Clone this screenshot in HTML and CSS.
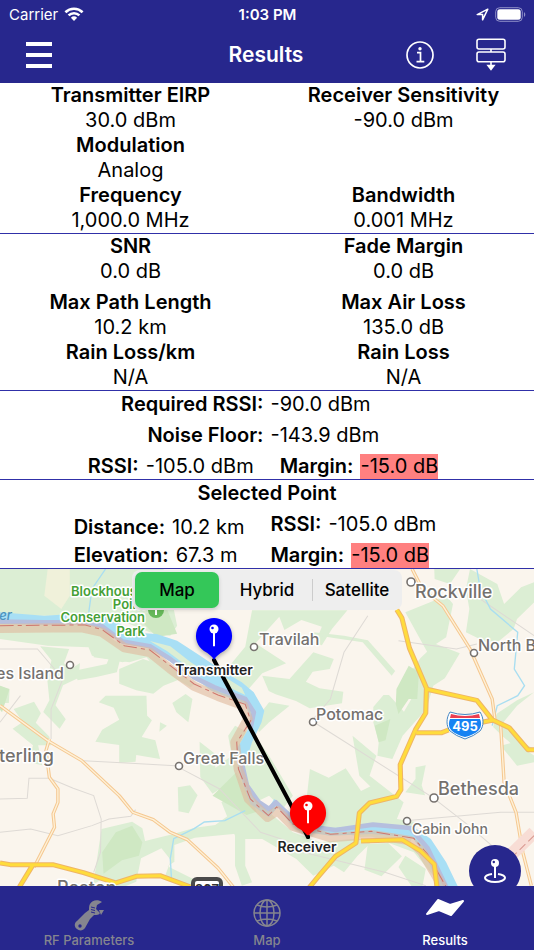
FILE: index.html
```
<!DOCTYPE html>
<html lang="en">

<head>
  <meta charset="utf-8">
  <title>Results</title>
  <meta name="viewport" content="width=device-width,initial-scale=1">
  <link rel="stylesheet" href="styles.css">
</head>

<body>
  <header class="header">
    <div class="status">
      <div class="status__carrier">
        <span>Carrier</span>
        <svg width="20" height="16" viewBox="0 0 20 16" fill="none" stroke="#fff" stroke-width="2.6">
          <path d="M1.400 6.200a12.400 12.400 0 0 1 17.200 0M4.600 9.400a7.800 7.800 0 0 1 10.800 0" />
          <path d="M10 15l-3.100-3.200a4.500 4.500 0 0 1 6.200 0z" fill="#fff" stroke="none" />
        </svg>
      </div>
      <span class="status__time">1:03 PM</span>
      <div class="status__icons">
        <svg width="13" height="13" viewBox="0 0 13 13" fill="none" stroke="#fff" stroke-width="1.5" stroke-linejoin="round">
          <path d="M1.200 6.600L11.800 1.200 6.600 11.800V6.600z" />
        </svg>
        <svg width="31" height="15" viewBox="0 0 31 15">
          <rect x=".7" y=".7" width="26.6" height="13.6" rx="4" fill="none" stroke="#8f8fc8" />
          <rect x="2.3" y="2.3" width="23.4" height="10.4" rx="2.5" fill="#fff" />
          <path d="M29 5.200c1.700.6 1.700 4 0 4.600z" fill="#8f8fc8" />
        </svg>
      </div>
    </div>
    <div class="nav">
      <button class="nav__button" type="button" aria-label="Menu">
        <svg width="26" height="26" viewBox="0 0 26 26" fill="#fff">
          <path d="M0 0h26v4H0zM0 11h26v4H0zM0 22h26v4H0z" />
        </svg>
      </button>
      <h1>Results</h1>
      <div class="nav__actions">
        <button class="nav__button" type="button" aria-label="Info">
          <svg width="28" height="28" viewBox="0 0 28 28" fill="none" stroke="#fff" stroke-width="1.7">
            <circle cx="14" cy="14" r="13" />
            <circle cx="14" cy="7.7" r="1.7" fill="#fff" stroke="none" />
            <path d="M11 11.700h3.500v8.800M10.500 20.600h7.800" />
          </svg>
        </button>
        <button class="nav__button" type="button" aria-label="Move sections down">
          <svg width="30" height="33" viewBox="0 0 30 33" fill="none" stroke="#fff" stroke-width="1.6">
            <rect x="1" y="1.3" width="28" height="9.7" rx="2" />
            <rect x="1" y="14" width="28" height="9.7" rx="2" />
            <path d="M15 11v3M15 24v4" />
            <path d="M12 27.500h6l-3 4z" fill="#fff" />
          </svg>
        </button>
      </div>
    </div>
  </header>

  <main>
    <section class="grid">
      <dl class="item">
        <dt>Transmitter EIRP</dt>
        <dd>30.0 dBm</dd>
      </dl>
      <dl class="item">
        <dt>Receiver Sensitivity</dt>
        <dd>-90.0 dBm</dd>
      </dl>
      <dl class="item item--left">
        <dt>Modulation</dt>
        <dd>Analog</dd>
      </dl>
      <dl class="item item--left">
        <dt>Frequency</dt>
        <dd>1,000.0 MHz</dd>
      </dl>
      <dl class="item">
        <dt>Bandwidth</dt>
        <dd>0.001 MHz</dd>
      </dl>
    </section>

    <section class="grid">
      <dl class="item item--spaced">
        <dt>SNR</dt>
        <dd>0.0 dB</dd>
      </dl>
      <dl class="item item--spaced">
        <dt>Fade Margin</dt>
        <dd>0.0 dB</dd>
      </dl>
      <dl class="item">
        <dt>Max Path Length</dt>
        <dd>10.2 km</dd>
      </dl>
      <dl class="item">
        <dt>Max Air Loss</dt>
        <dd>135.0 dB</dd>
      </dl>
      <dl class="item">
        <dt>Rain Loss/km</dt>
        <dd>N/A</dd>
      </dl>
      <dl class="item">
        <dt>Rain Loss</dt>
        <dd>N/A</dd>
      </dl>
    </section>

    <section class="summary">
      <dl class="pair pair--split">
        <dt>Required RSSI:</dt>
        <dd>-90.0 dBm</dd>
      </dl>
      <dl class="pair pair--split">
        <dt>Noise Floor:</dt>
        <dd>-143.9 dBm</dd>
      </dl>
      <div class="row">
        <dl class="pair">
          <dt>RSSI:</dt>
          <dd>-105.0 dBm</dd>
        </dl>
        <dl class="pair">
          <dt>Margin:</dt>
          <dd class="bad">-15.0 dB</dd>
        </dl>
      </div>
    </section>

    <section class="summary">
      <h2>Selected Point</h2>
      <div class="row row--point">
        <div class="stack stack--tight">
          <dl class="pair">
            <dt>Distance:</dt>
            <dd>10.2 km</dd>
          </dl>
          <dl class="pair">
            <dt>Elevation:</dt>
            <dd>67.3 m</dd>
          </dl>
        </div>
        <div class="stack">
          <dl class="pair">
            <dt>RSSI:</dt>
            <dd>-105.0 dBm</dd>
          </dl>
          <dl class="pair">
            <dt>Margin:</dt>
            <dd class="bad">-15.0 dB</dd>
          </dl>
        </div>
      </div>
    </section>
  </main>

  <div class="map">
    <svg class="map__canvas" viewBox="0 0 534 317" preserveAspectRatio="xMidYMid slice">
      <rect width="534" height="317" fill="#faf5ed" />

      <g transform="scale(.3406 .3333)">
        <!-- woods and parks -->
        <g fill="#dceed4">
          <path d="M0 0H480L500 70 520 170 500 200 440 190 380 165 300 140 0 140z" />
          <path d="M0 160h280l60 60-40 30 90 20-30 10-90-20-10-25-120-5-140-20z" />
          <path d="M280 190l90 40 70 10 60 50 70 55-10 10-60-35-40-20-30-35-50 15-105-15z" />
          <path d="M118 232l85 8-15 42 15 22 32-22-5 45-45 22-22 60 30 42-18 28-48-50 18-35-6-60 12-60zM218 305l95-20 10-25 30 10-10 40-60 14-55 10z" />
          <path d="M0 350l28 12-2 40-26 0zM40 420l60-22 20 35-15 28 40 42 5 26-38 0 12 60-42-10 15-50-60-50 30-20z" />
          <path d="M290 400l20-20 120 0 2 60 14 14-30 50 40 10 14 56-70-12-2 20-48 4 0-54-70-10 20-36 50-30-16-36z" />
          <path d="M350 300l70-30 60 20 50 40-50 20-30 24-50-10-50-20z" />
          <path d="M545 375l20 15-12 70-35-30-12-28zM470 460l20 10-22 18zM586 518l50 40-6 28 20 70-26 18-36-50z" />
          <path d="M522 655l36-6 22 30-26 54-30-6z" />
          <path d="M298 780l90-22 30 20 8 38 80-20 66-20 60-8 60-44 50 8-50 62-120 12-60 22 0 50-20 14 80 40-20 26-70-30 20-54-28-36-60 30-14 70-60 26-30-40-36 22z" />
          <path d="M690 470l60 30 40 60 70 120-30 40-40-40-60 30-80-40-60-40 90-70-10-60z" />
          <path d="M650 700l60-40 80 70 70 60 80 30 90-10 70 0-50 50-40 50-30-20-60 30-50-50-100-60-50 0 0 80 20 50-30 10-20-60 0-90z" />
          <path d="M900 690l10-90 55 26 50-28 45 68 40-20 50 90-40 66-50 2-150-30z" />
          <path d="M740 124h280l-45 55-30 50-20-6 20-50-60-20-50 30-15-40-70 80 90 60-70 30-60 70-60-40 30-60 40-50z" />
          <path d="M770 320l80 10 70-80 60 20-12 30-50 8-20 30 40 20 70 10-4 35-95 15-40-22-60-20-20-10z" />
          <path d="M920 190l90 10 70 14 80 92-10 14-85-100-90-14-60-10z" />
          <path d="M790 400l60 10-60 50-30 30-8-40z" />
          <path d="M1190 130l120-50 20 25-20 100-30 20 70 28-44 75-34 22-20 70-70 80-30 70-44-10 4-40-16-60 0-46 30-36 16 0 44 50 40-70-32-30 40-60 20-20z" />
          <path d="M1275 0h76l-30 45-45-15zM1380 0l80 45 20 60 50-50 38-15v60l-50 50-10 30-60 50-80-40 10-70-10-60z" />
          <path d="M1568 370l-50 40-40 50 40 50 50 30-30 16-60-52-30-30 10-40 60-40z" />
          <path d="M1035 500l70 60-20 60 100 80-20 50 60 10-20 60 80 60 40 70-20 10-90-110-130-50-10-50 30-80-50-50z" />
          <path d="M1190 670l30-40 0-35 30-6-12 60 10 30z" />
          <path d="M1080 824l60-2 40 40-60 60-50-20zM1190 860l60 40-10 54h-30l-40-60zM1470 530l40-10 58 40v20l-50 10z" />
        </g>
        <g fill="#cfe8c3">
          <path d="M1164 360l36-70 30 20-5 80-25 0-30 45-8-30zM1100 470l46-20-14 64-20 6z" />
          <path d="M624 680l70-70 60 118-30 10zM300 850l40-60 48-20 30 50-10 40-50 14-54 40zM0 350l28 10-22 70-6-8zM400 140l90-20 30 74-60 10z" />
        </g>
        <path d="M140 0h65v80l-25 40-50-40z" fill="#f0f1da" />

        <!-- small roads -->
        <path d="M0 240l110 0 50 60 28 20-38 100 0 90M0 690l80-2 5-60 60 0 70 30 60 22 22 70-2 100-20 60M0 790l90-10 80 20 100-30 50-20 64-8 14-20M245 575l270 15 130 70 120 130 90 30M1080 140l-70 110-40 140-50 60M930 465l340 220 100 80 80 70M1170 215l170 25 60-15M1190 755l280-25h98M1410 90l158 110M890 850l240 60 120 40M0 460l60-80" fill="none" stroke="#dedad5" stroke-width="3" />
        <path d="M310 0l-40 60-10 75M1400 0l10 60 30 60 80 70-10 110 30 50-20 30-60 30-15 60M720 725l-60 30-60 4-30 20-60 30-10 60 4 70" fill="none" stroke="#a9def1" stroke-width="4" />

        <!-- secondary roads -->
        <g fill="none" stroke="#f5c891" stroke-width="10" stroke-linejoin="round">
          <path d="M0 410l140 105 100 60 110 105 40 50 60 22 50 38 50 22 90 85 45 57M145 510l-10 35 10 80 25 35v40l-14 35 4 40-60 120M1210 0l30 60 60 50 80 130 65 150 8 60M1470 470l10 170 35 90 20 120 25 100" />
        </g>
        <g fill="none" stroke="#fef1d8" stroke-width="4" stroke-linejoin="round">
          <path d="M0 410l140 105 100 60 110 105 40 50 60 22 50 38 50 22 90 85 45 57M145 510l-10 35 10 80 25 35v40l-14 35 4 40-60 120M1210 0l30 60 60 50 80 130 65 150 8 60M1470 470l10 170 35 90 20 120 25 100" />
        </g>

        <!-- Potomac river and the state border along it -->
        <path d="M0 130L130 140 260 132 310 138 350 160 380 190 460 195 520 215 580 255 660 310 710 340 745 370 776 425 768 460 740 520 715 600 722 660 750 695 790 715 805 690 850 730 930 765 960 778 1100 770 1220 778 1265 810 1310 880 1345 954 1290 954 1250 860 1210 805 1090 795 970 800 900 790 850 760 815 715 790 745 735 705 705 620 695 540 740 460 720 405 620 365 550 310 480 265 430 235 360 220 290 170 240 160 0 160z" fill="#a8dff5" />
        <path d="M440 216l60 16 60 48 40 26-50-14-60-46zM660 324l50 32 10 22-50-24z" fill="#dceed4" />
        <path d="M0 158L130 160 250 160 300 172 360 218 440 232 500 270 570 325 630 355 720 390 745 430 735 480M705 560l20 90 35 50 30 20 20-20 45 45 70 30 60 8 110-16 110 10 50 60 55 117" fill="none" stroke="#b5bfde" stroke-width="14" stroke-linejoin="round" />
        <path d="M0 178L240 176 300 190 365 236 440 250 500 300 570 352 640 382 715 410 728 450 690 520 700 600 730 690 785 745 815 725 860 772 970 806 1090 797 1205 815 1240 850 1300 954" fill="none" stroke="#dfb99c" stroke-opacity=".6" stroke-width="28" stroke-linejoin="round" />
        <path d="M0 170L250 168 300 182 365 230 440 243 500 290 570 345 640 378 720 406 736 455 695 520 700 600 735 690 788 740 812 714 860 765 970 796 1090 787 1215 808 1255 855 1310 954" fill="none" stroke="#cf776e" stroke-width="3" stroke-dasharray="40 12 12 12" />
        <path d="M1568 790l-90 90-80 74" fill="none" stroke="#f8ddd5" stroke-width="38" />
        <path d="M1568 800l-90 90-60 64" fill="none" stroke="#d99890" stroke-width="3" stroke-dasharray="24 12" />

        <!-- highways -->
        <g fill="none" stroke-linejoin="round">
          <path d="M0 882l30 5h125l90 24 95 31 60-20 70-2 90 34M97 887l-40 67M1165 122l15 25 22 90 50 120-2 75-30 50-45 105 2 75-12 20-80 20-30 30-10 90-60 40-50 60-40 50M1250 360l150 34 45 58 50 24 55 66h18M1222 491h75l20-8M1415 460l30-6M1060 816l120-4 55 34 40 40 8 68" stroke="#efb566" stroke-width="15" />
          <path d="M0 882l30 5h125l90 24 95 31 60-20 70-2 90 34M97 887l-40 67M1165 122l15 25 22 90 50 120-2 75-30 50-45 105 2 75-12 20-80 20-30 30-10 90-60 40-50 60-40 50M1250 360l150 34 45 58 50 24 55 66h18M1222 491h75l20-8M1415 460l30-6M1060 816l120-4 55 34 40 40 8 68" stroke="#ffdc3c" stroke-width="9" />
        </g>
      </g>

      <!-- road shields -->
      <path d="M450 143q15 5 30 0c4 6 4 14 0 19q-6 5-15 8-9-3-15-8c-4-5-4-13 0-19z" fill="#fff" stroke="#4386c3" />
      <path d="M450 150h30c2 5 1 9-2 12q-5 4-13 6-8-2-13-6c-3-3-4-7-2-12z" fill="#1683f3" />
      <path d="M451 145q14 4 28 0l1 4h-30z" fill="#eb3f51" />
      <text class="shield" x="465" y="162">495</text>
      <rect x="193" y="310" width="28" height="18" rx="4" fill="#fff" stroke="#4a4a4a" stroke-width="4" />
      <text class="shield shield--state" x="207" y="325">267</text>

      <!-- places -->
      <g fill="#fff" stroke="#77726e" stroke-width="1.6">
        <circle cx="411" cy="13" r="4" />
        <circle cx="474" cy="84" r="3.5" />
        <circle cx="254" cy="78" r="3.5" />
        <circle cx="70" cy="96" r="3.5" />
        <circle cx="313" cy="153" r="3.5" />
        <circle cx="179" cy="197" r="3.5" />
        <circle cx="434" cy="229" r="4" />
        <circle cx="407" cy="252" r="3.5" />
      </g>
      <g class="place">
        <text class="place--big" x="415" y="29">Rockville</text>
        <text x="478" y="82">North Bethesda</text>
        <text x="259" y="76">Travilah</text>
        <text x="-4" y="110">es Island</text>
        <text x="316" y="151">Potomac</text>
        <text class="place--big" x="-1" y="193">terling</text>
        <text x="183" y="195">Great Falls</text>
        <text class="place--big" x="438" y="226">Bethesda</text>
        <text class="place--small" x="412" y="265">Cabin John</text>
        <text class="place--big" x="57" y="325">Reston</text>
      </g>
      <circle cx="156" cy="41" r="8" fill="#66b85a" />
      <path d="M156 38v8M152 40h8" stroke="#fff" stroke-width="2" />
      <g class="park">
        <text x="71" y="27">Blockhouse</text>
        <text x="145" y="40" text-anchor="end">Point</text>
        <text x="145" y="53" text-anchor="end">Conservation</text>
        <text x="145" y="67" text-anchor="end">Park</text>
      </g>
      <text class="water" x="-8" y="51">ver</text>

      <!-- link between the two stations -->
      <path d="M214 91L308 268" stroke="#000" stroke-width="4" stroke-linecap="round" />
      <g class="pin">
        <path d="M214 49a18 18 0 0 1 10 33c-5 3-8 5-10 9-2-4-5-6-10-9a18 18 0 0 1 10-33z" fill="#00f" />
        <circle cx="214" cy="60" r="4.5" fill="#fff" />
        <circle cx="212.5" cy="59" r="1.3" fill="#00f" />
        <path d="M213.500 64h1v13h-1z" fill="#fff" stroke="#fff" />
      </g>
      <text class="station" x="214" y="106">Transmitter</text>
      <g class="pin">
        <path d="M308 226a18 18 0 0 1 10 33c-5 3-8 5-10 9-2-4-5-6-10-9a18 18 0 0 1 10-33z" fill="#f00" />
        <circle cx="308" cy="237" r="4.5" fill="#fff" />
        <circle cx="306.5" cy="236" r="1.3" fill="#f00" />
        <path d="M307.500 241h1v13h-1z" fill="#fff" stroke="#fff" />
      </g>
      <circle cx="308" cy="268" r="2" />
      <text class="station" x="307" y="283">Receiver</text>
    </svg>

    <div class="segments" role="radiogroup" aria-label="Map type">
      <input type="radio" name="maptype" id="type-map" checked>
      <label for="type-map">Map</label>
      <input type="radio" name="maptype" id="type-hybrid">
      <label for="type-hybrid">Hybrid</label>
      <input type="radio" name="maptype" id="type-satellite">
      <label class="divided" for="type-satellite">Satellite</label>
    </div>

    <button class="locate" type="button" aria-label="Drop pin">
      <svg width="24" height="28" viewBox="0 0 24 28" fill="none" stroke="#fff">
        <path d="M9 17c-5 .8-7 2.200-7 3.800C2 23 6.500 25 12 25s10-2 10-4.200c0-1.600-2-3-7-3.800" stroke-width="2" />
        <path d="M12 9v12" stroke-width="2" />
        <circle cx="12" cy="6" r="4" fill="#fff" stroke="none" />
        <circle cx="10.8" cy="5" r="1.2" fill="#27278d" stroke="none" />
      </svg>
    </button>
  </div>

  <nav class="tabs">
    <a class="tab" href="#parameters">
      <svg width="34" height="36" viewBox="0 0 34 36">
        <path d="M18 8C20 4 26 3 30 6l-5 3-1 4 4 4c-1 2-3 2-6 2l-4 4-5 9c-2 3-6 3-8 1-3-2-3-6 0-8l8-8 4-3c0-3 0-4 1-6z" fill="#85858f" />
        <path d="M27 14l5 0-3 5z" fill="#85858f" />
        <circle cx="8" cy="30" r="1.7" fill="#27278d" />
        <path d="M19 11l4 1M19 13.500l4 1M19 16l4 1" stroke="#27278d" />
      </svg>
      RF Parameters
    </a>
    <a class="tab" href="#map">
      <svg width="28" height="36" viewBox="0 0 28 36" fill="none" stroke="#85858f" stroke-width="1.5">
        <circle cx="14" cy="17" r="13" />
        <ellipse cx="14" cy="17" rx="7" ry="13" />
        <path d="M14 4v26M1 17h26M4 9q10 4 20 0M4 25q10-4 20 0" />
      </svg>
      Map
    </a>
    <a class="tab tab--active" href="#results">
      <svg width="40" height="36" viewBox="0 0 40 36">
        <path d="M2 18L13 4l12 5 13-4-12 14-12-5z" fill="#fff" stroke="#fff" stroke-width="2" stroke-linejoin="round" />
      </svg>
      Results
    </a>
  </nav>
</body>

</html>
```
FILE: styles.css
```
* {
  box-sizing: border-box;
}

body {
  display: flex;
  flex-direction: column;
  min-height: 100vh;
  margin: 0;
  background: #fff;
  color: #000;
  font-family: Inter, "Liberation Sans", sans-serif;
  font-size: 20px;
  line-height: 25px;
}

h1,
h2,
dl,
dd {
  margin: 0;
}

h1,
h2,
dt {
  font-size: 20px;
  font-weight: 600;
}

button {
  padding: 0;
  border: none;
  background: none;
  cursor: pointer;
}

svg {
  display: block;
}

/* Header */

.header {
  background: #27278d;
  color: #fff;
}

.status,
.nav {
  display: grid;
  grid-template-columns: 1fr auto 1fr;
  align-items: center;
}

.status {
  height: 28px;
  padding: 0 8px 0 9px;
  font-size: 15px;
}

.status__carrier,
.status__icons {
  display: flex;
  align-items: center;
  gap: 6px;
}

.status__icons {
  justify-content: flex-end;
}

.status__time {
  font-weight: 600;
}

.nav {
  height: 55px;
  padding: 0 28px 2px 26px;
}

.nav h1 {
  font-size: 21px;
}

.nav__button {
  justify-self: start;
}

.nav__actions {
  display: flex;
  align-items: center;
  justify-content: flex-end;
  gap: 42px;
}

/* Results */

main section {
  border-bottom: 1px solid #3030a8;
}

.grid {
  display: grid;
  grid-template-columns: 1fr 1fr;
  column-gap: 12px;
  text-align: center;
}

.item--left {
  grid-column: 1;
}

.item--spaced {
  margin-bottom: 6px;
}

.summary {
  display: flex;
  flex-direction: column;
  gap: 6px;
  padding-top: 1px;
  text-align: center;
}

.pair {
  display: flex;
  gap: 7px;
}

.pair--split {
  display: grid;
  grid-template-columns: 1fr 1fr;
}

.pair--split dt {
  text-align: right;
}

.pair--split dd {
  text-align: left;
}

.row {
  display: flex;
  justify-content: center;
  gap: 26px;
  padding-right: 8px;
}

.row--point {
  align-items: flex-end;
  padding-right: 24px;
}

.stack {
  display: flex;
  flex-direction: column;
  gap: 6px;
}

.stack--tight {
  gap: 3px;
}

.bad {
  background: #ff8080;
}

/* Map */

.map {
  position: relative;
  flex: 1;
  min-height: 240px;
  overflow: hidden;
}

.map__canvas {
  position: absolute;
  width: 100%;
  height: 100%;
}

.map text {
  paint-order: stroke;
  stroke: #fff;
  stroke-width: 3px;
  stroke-linejoin: round;
  font-weight: 600;
}

.place {
  fill: #74716e;
  font-size: 16px;
}

.map .place text {
  font-weight: 500;
}

.place--big {
  font-size: 18px;
}

.place--small {
  font-size: 14px;
}

.park {
  fill: #45a036;
  font-size: 13px;
}

.map .water {
  fill: #4b93bd;
  stroke: none;
  font-size: 13px;
  font-style: italic;
  font-weight: 500;
}

.station {
  fill: #222;
  font-size: 14px;
  text-anchor: middle;
}

.map .shield {
  fill: #fff;
  stroke: none;
  font-size: 13px;
  font-weight: 700;
  text-anchor: middle;
}

.map .shield--state {
  fill: #333;
}

.pin {
  filter: drop-shadow(0 2px 2px rgba(0, 0, 0, .3));
}

.segments {
  position: absolute;
  top: 1px;
  left: 50%;
  display: grid;
  grid-template-columns: repeat(3, 90px);
  padding: 2px 0;
  border-radius: 8px;
  background: #eee;
  font-size: 17px;
  font-weight: 500;
  line-height: 36px;
  text-align: center;
  transform: translateX(-50%);
}

.segments input {
  position: absolute;
  opacity: 0;
}

.segments label {
  margin: 0 3px;
  border-radius: 7px;
  cursor: pointer;
}

.segments input:checked + label {
  background: #34c759;
  box-shadow: 0 2px 4px rgba(0, 0, 0, .15);
}

.segments .divided {
  margin: 0;
  background: linear-gradient(#ccc, #ccc) left center / 1px 22px no-repeat;
}

.locate {
  position: absolute;
  right: 13px;
  bottom: -11px;
  display: flex;
  align-items: center;
  justify-content: center;
  width: 52px;
  height: 52px;
  border-radius: 50%;
  background: #27278d;
}

/* Tab bar */

.tabs {
  display: grid;
  grid-template-columns: repeat(3, 1fr);
  height: 64px;
  background: #27278d;
}

.tab {
  display: flex;
  flex-direction: column;
  align-items: center;
  padding-top: 10px;
  color: #85858f;
  font-size: 13px;
  font-weight: 500;
  line-height: 16px;
  text-decoration: none;
}

.tab--active {
  color: #fff;
}
```
